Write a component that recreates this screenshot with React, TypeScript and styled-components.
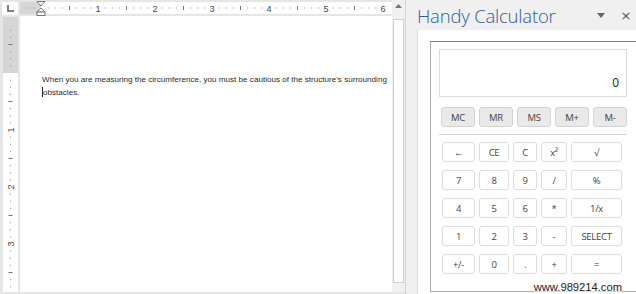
import React from "react";
import styled, { createGlobalStyle } from "styled-components";

const GlobalStyle = createGlobalStyle`
  html, body { margin: 0; padding: 0; background: #e6e6e6; }
  #root { width: 636px; height: 294px; }
`;

const INCH = 57;
const MARGIN = 21;

const Window = styled.div`
  position: relative;
  display: flex;
  width: 636px;
  height: 294px;
  overflow: hidden;
  background: #e6e6e6;
  font-family: "Open Sans", "Noto Sans", sans-serif;
`;

const DocArea = styled.div`
  display: grid;
  grid-template-columns: 20px 372px 13px;
  grid-template-rows: 16px 276px;
  width: 405px;
  border-right: 1px solid #d2d2d2;
  background: #e6e6e6;
`;

const Corner = styled.div`
  display: flex;
  align-items: center;
  justify-content: center;
  padding: 2px 2px 1px;
`;

const CornerBox = styled.div`
  flex: 1;
  height: 100%;
  background: #fff;
  display: flex;
  align-items: center;
  justify-content: center;
`;

const RulerH = styled.div`
  display: flex;
  align-items: stretch;
`;

const RulerV = styled.div`
  display: flex;
  justify-content: center;
`;

const Page = styled.div`
  background: #fff;
  padding: 57px 0 0 22px;
  font-family: "Liberation Sans", Arial, sans-serif;
  font-size: 8.1px;
  line-height: 13px;
  color: #2a2a2a;
`;

const Paragraph = styled.p`
  margin: 0;
  width: 352px;
`;

const Word = styled.span`
  white-space: nowrap;
`;

const Caret = styled.span`
  display: inline-block;
  width: 0;
  height: 10px;
  vertical-align: -2px;
  border-left: 1px solid #222;
`;

const ScrollCol = styled.div`
  background: #f0f0f0;
  display: flex;
  justify-content: center;
  align-items: flex-start;
  padding-top: 4px;
`;

const ScrollTrack = styled.div`
  background: #f0f0f0;
  padding: 3px 1px 9px 1px;
  display: flex;
`;

const Thumb = styled.div`
  flex: 1;
  background: #fff;
  border: 1px solid #cfcfcf;
`;

const Pane = styled.div`
  flex: 1;
  display: flex;
  flex-direction: column;
  background: #f0f0f0;
`;

const PaneHeader = styled.div`
  height: 30px;
  display: flex;
  align-items: center;
  padding-left: 11px;
`;

const PaneTitle = styled.div`
  flex: 1;
  font-family: "Open Sans", "Noto Sans", sans-serif;
  font-weight: 300;
  font-size: 18.5px;
  color: #2f5d9b;
  letter-spacing: -0.2px;
`;

const HeaderButton = styled.span<{ $w: number }>`
  width: ${(p) => p.$w}px;
  display: flex;
  justify-content: center;
  color: #555;
  font-family: "DejaVu Sans", sans-serif;
  font-size: 13px;
`;

const PaneBody = styled.div`
  flex: 1;
  margin-left: 11px;
  background: #fff;
  border-left: 1px solid #dadada;
  padding: 11px 0 0 12px;
  display: flex;
`;

const CalcBox = styled.div`
  width: 214px;
  flex-shrink: 0;
  height: 251px;
  border: 1px solid #ababab;
  border-top-color: #7c7c7c;
  border-right: none;
  padding: 7px 0 0 8px;
  background: #fff;
  box-sizing: border-box;
`;

const Display = styled.div`
  width: 188px;
  height: 48px;
  border: 1px solid #dcdcdc;
  box-sizing: border-box;
  display: flex;
  align-items: flex-end;
  justify-content: flex-end;
  padding: 0 7px 5px 0;
  font-family: "Open Sans", sans-serif;
  font-size: 12px;
  color: #222;
`;

const MemoryRow = styled.div`
  display: grid;
  grid-template-columns: repeat(5, 34px);
  column-gap: 4px;
  margin: 10px 0 0 2px;
`;

const Divider = styled.div`
  width: 188px;
  height: 1px;
  background: #d4d4d4;
  margin: 7px 0 7px 0;
`;

const KeyGrid = styled.div`
  display: grid;
  grid-template-columns: 33px 30px 24px 26px 51px;
  grid-auto-rows: 20px;
  column-gap: 4px;
  row-gap: 8px;
  margin-left: 3px;
`;

const Key = styled.div<{ $memory?: boolean }>`
  display: flex;
  align-items: center;
  justify-content: center;
  box-sizing: border-box;
  height: 20px;
  border: 1px solid ${(p) => (p.$memory ? "#d3d3d3" : "#dcdcdc")};
  border-radius: 3px;
  background: ${(p) => (p.$memory ? "#e9e9e9" : "#fff")};
  color: #444;
  font-family: "Open Sans", sans-serif;
  font-size: 9.5px;
  letter-spacing: -0.3px;
`;

const Watermark = styled.div`
  position: absolute;
  right: 14px;
  bottom: 0px;
  font-family: "Liberation Sans", Arial, sans-serif;
  font-size: 11.2px;
  line-height: 14px;
  color: #222;
  background: rgba(255, 255, 255, 0.6);
`;

const HorizontalRuler = () => {
  const marks: React.ReactNode[] = [];
  for (let i = -2; i <= 50; i++) {
    const x = MARGIN + (i * INCH) / 8;
    if (x > 370) break;
    if (i % 8 === 0) {
      if (i > 0)
        marks.push(
          <text key={i} x={x} y={11.5} fontSize={9} textAnchor="middle" fill="#444" fontFamily="Liberation Sans, Arial, sans-serif">
            {i / 8}
          </text>
        );
    } else if (i % 4 === 0) {
      marks.push(<rect key={i} x={x - 0.5} y={6} width={1} height={4} fill="#777" />);
    } else {
      marks.push(<rect key={i} x={x - 0.5} y={7.5} width={1} height={1} fill="#888" />);
    }
  }
  return (
    <svg width={372} height={16}>
      <rect x={0} y={2} width={MARGIN} height={12} fill="#d6d6d6" />
      <rect x={MARGIN} y={2} width={351} height={12} fill="#fff" />
      {marks}
      <path d={`M${MARGIN - 4} 1.5 L${MARGIN + 4} 1.5 L${MARGIN} 6 Z`} fill="#fff" stroke="#777" />
      <path d={`M${MARGIN} 8 L${MARGIN + 4} 12 L${MARGIN - 4} 12 Z`} fill="#fff" stroke="#777" />
      <rect x={MARGIN - 4} y={12} width={8} height={3.5} fill="#fff" stroke="#777" />
    </svg>
  );
};

const VerticalRuler = () => {
  const top = 57;
  const marks: React.ReactNode[] = [];
  for (let i = -6; i <= 40; i++) {
    const y = top + (i * INCH) / 8;
    if (y < 3 || y > 276) continue;
    if (i % 8 === 0) {
      if (i > 0)
        marks.push(
          <text
            key={i}
            x={7.5}
            y={y + 3}
            fontSize={9}
            textAnchor="middle"
            fill="#444"
            fontFamily="Liberation Sans, Arial, sans-serif"
            transform={`rotate(-90 7.5 ${y})`}
          >
            {i / 8}
          </text>
        );
    } else if (i % 4 === 0) {
      marks.push(<rect key={i} x={5.5} y={y - 0.5} width={4} height={1} fill="#777" />);
    } else {
      marks.push(<rect key={i} x={7} y={y - 0.5} width={1} height={1} fill="#888" />);
    }
  }
  return (
    <svg width={15} height={276}>
      <rect x={0} y={1} width={15} height={top - 1} fill="#d6d6d6" />
      <rect x={0} y={top} width={15} height={276 - top} fill="#fff" />
      {marks}
    </svg>
  );
};

const memoryKeys = ["MC", "MR", "MS", "M+", "M-"];
const keys = [
  "←", "CE", "C", "x²", "√",
  "7", "8", "9", "/", "%",
  "4", "5", "6", "*", "1/x",
  "1", "2", "3", "-", "SELECT",
  "+/-", "0", ".", "+", "=",
];

export default function App() {
  return (
    <>
      <GlobalStyle />
      <Window>
        <DocArea>
          <Corner>
            <CornerBox>
              <svg width={7} height={7}>
                <path d="M1 0 V6 H7" stroke="#555" strokeWidth={1.5} fill="none" />
              </svg>
            </CornerBox>
          </Corner>
          <RulerH>
            <HorizontalRuler />
          </RulerH>
          <ScrollCol>
            <svg width={7} height={4}>
              <path d="M0 4 L3.5 0 L7 4 Z" fill="#777" />
            </svg>
          </ScrollCol>
          <RulerV>
            <VerticalRuler />
          </RulerV>
          <Page>
            <Paragraph>
              When you are measuring the circumference, you must be cautious of the structure’s surrounding{" "}
              <Word>
                <Caret />
                obstacles.
              </Word>
            </Paragraph>
          </Page>
          <ScrollTrack>
            <Thumb />
          </ScrollTrack>
        </DocArea>
        <Pane>
          <PaneHeader>
            <PaneTitle>Handy Calculator</PaneTitle>
            <HeaderButton $w={14}>
              <svg width={8} height={5}>
                <path d="M0 0 H8 L4 5 Z" fill="#666" />
              </svg>
            </HeaderButton>
            <HeaderButton $w={36}>×</HeaderButton>
          </PaneHeader>
          <PaneBody>
            <CalcBox>
              <Display>0</Display>
              <MemoryRow>
                {memoryKeys.map((k) => (
                  <Key key={k} $memory>
                    {k}
                  </Key>
                ))}
              </MemoryRow>
              <Divider />
              <KeyGrid>
                {keys.map((k, i) => (
                  <Key key={i}>{k}</Key>
                ))}
              </KeyGrid>
            </CalcBox>
          </PaneBody>
        </Pane>
        <Watermark>www.989214.com</Watermark>
      </Window>
    </>
  );
}
